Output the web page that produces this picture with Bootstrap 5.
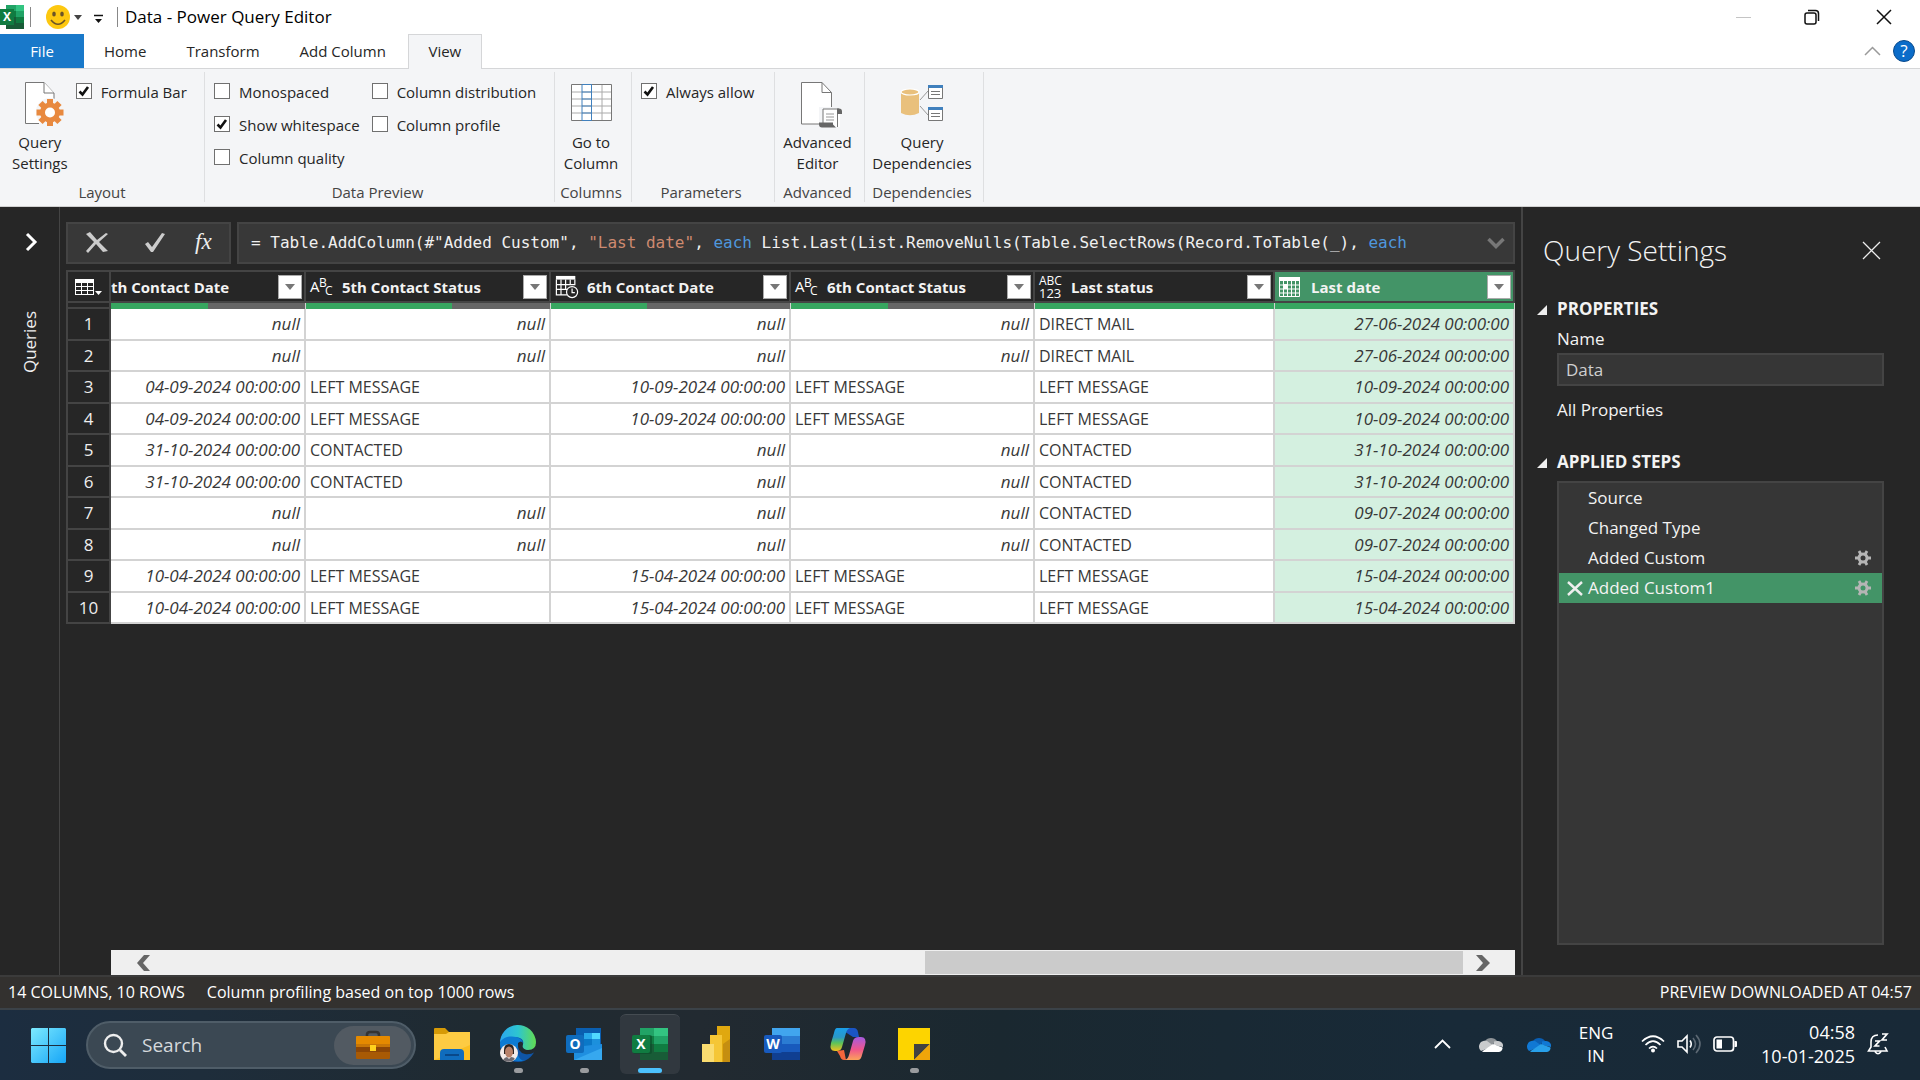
<!DOCTYPE html>
<html lang="en">
<head>
<meta charset="utf-8">
<meta name="viewport" content="width=device-width, initial-scale=1">
<title>Data - Power Query Editor</title>
<link href="https://cdn.jsdelivr.net/npm/bootstrap@5.3.0/dist/css/bootstrap.min.css" rel="stylesheet">
<style>
  :root { --pq-dark:#262626; --pq-panel:#363636; --pq-edge:#444; --pq-green:#439467; --pq-bar:#37a660; }
  body { font-family:"Open Sans","Noto Sans",sans-serif; font-size:15px; line-height:20px; color:#262626; background:var(--pq-dark); overflow:hidden; }
  button { font:inherit; color:inherit; background:none; border:0; padding:0; }
  svg { display:block; flex:none; overflow:visible; }
  a { color:inherit; text-decoration:none; }

  .titlebar { height:34px; background:#fff; font-size:17px; color:#000; }
  .titlebar .rule { width:1px; height:20px; background:#888; }
  .titlebar .smile { margin-left:15px; }
  .tabstrip { height:34px; background:#fff; }
  .tabstrip a { height:34px; line-height:34px; text-align:center; position:relative; }
  .tab-file { width:84px; background:#1979ca; color:#fff; }
  .tabstrip .tab-open { width:74px; height:35px; line-height:32px; margin-left:6px; background:#f4f5f7; border:1px solid #d5d6d8; border-bottom:0; }
  .help-dot { width:22px; height:22px; border-radius:50%; background:#0b6cc9; border:1px solid #0a4a8c; color:#fff; line-height:20px; font-size:17px; }

  .ribbon { height:139px; background:#f4f5f7; border-top:1px solid #d5d6d8; border-bottom:1px solid #d0d0d0; }
  .rgroup { display:flex; flex-direction:column; margin:3px 0 4px; padding:3px 4px 0 0; border-right:1px solid #dedfe1; }
  .rgroup h2 { font-size:15px; line-height:20px; font-weight:400; margin:auto 0 0; text-align:center; color:#444; }
  .g-layout { width:205px; padding-right:0; } .g-preview { width:350px; } .g-columns { width:77px; } .g-params { width:143px; } .g-adv { width:90px; } .g-dep { width:119px; }
  .big-btn { display:flex; flex-direction:column; align-items:center; line-height:21px; padding-top:6px; }
  .big-btn svg { margin-bottom:5px; }
  .tick { display:flex; align-items:center; height:33px; white-space:nowrap; }
  .tick input { appearance:none; width:16px; height:16px; margin:0 9px 2px 0; background:#fff; border:1px solid #707070; border-radius:0; flex:none; }
  .tick input:checked { background:#fff url("data:image/svg+xml,%3Csvg xmlns='http://www.w3.org/2000/svg' viewBox='0 0 14 14'%3E%3Cpath d='M2.5 7.5l3 3 5.500-7.500' fill='none' stroke='%23111' stroke-width='2.600'/%3E%3C/svg%3E"); }
  .inset { padding-left:9px; }

  .rail { flex:0 0 60px; border-right:1px solid var(--pq-edge); color:#eee; padding-top:26px; }
  .rail span { writing-mode:vertical-rl; transform:rotate(180deg); font-size:17px; line-height:24px; margin-top:60px; }
  .sheet { flex:1 1 0; min-width:0; padding:15px 6px 0 6px; border-right:2px solid var(--pq-edge); }
  .fx-row { gap:6px; }
  .fx-box { height:42px; background:#383838; border:2px solid var(--pq-edge); }
  .fx-btns { width:165px; padding-left:4px; }
  .fx-btns button { flex:1 1 0; display:flex; justify-content:center; }
  .fx-text { font-family:"DejaVu Sans Mono","Liberation Mono",monospace; font-size:16px; line-height:38px; color:#f0f0f0; white-space:pre; outline:0; }
  .fx-text .str { color:#ce8a70; } .fx-text .kw { color:#4f97dd; }

  .grid { table-layout:fixed; border-collapse:separate; border-spacing:0; width:100%; margin-top:6px; font-size:16px; line-height:20px; color:#383838; }
  .grid .c0 { width:45px; } .grid .c1 { width:195px; } .grid .c2 { width:245px; } .grid .c3 { width:240px; } .grid .c4 { width:244px; } .grid .c5 { width:240px; }
  .grid thead th { height:33px; padding:0; border:solid var(--pq-edge); border-width:2px 2px 2px 0; color:#f3f3f3; font-size:15px; font-weight:700; overflow:hidden; white-space:nowrap; }
  .grid tr > :first-child { border-left:2px solid var(--pq-edge); }
  .grid thead .picked { background:var(--pq-green); }
  .grid .ql td { height:6px; padding:0; border-right:1px solid #d3d3d3; }
  .grid .ql td:first-child { border-right:2px solid var(--pq-edge); border-bottom:2px solid var(--pq-edge); }
  .meter { height:6px; background:#666; } .meter div { height:6px; background:var(--pq-bar); }
  .hcell { display:flex; align-items:center; height:29px; padding:0 2px 0 4px; }
  .hcell .pic { width:24px; margin-right:8px; font-weight:400; }
  .hcell button { margin-left:auto; width:24px; height:24px; background:#fff; border:1px solid #aaa; display:flex; align-items:center; justify-content:center; }
  .grid tbody td, .grid tbody th { height:32px; padding:0 4px; background:#fff; border:solid #d3d3d3; border-width:0 2px 2px 0; white-space:nowrap; vertical-align:middle; overflow:hidden; }
  .grid tbody tr:nth-child(even) > * { height:31px; }
  .grid tbody th { background:var(--pq-dark); border-color:var(--pq-edge); color:#eee; font-weight:400; text-align:center; padding:0; font-size:17px; }
  .grid .v { text-align:right; font-style:italic; font-size:17px; }
  .grid tbody td:last-child { background:#d4f0e0; }
  .hbar { height:25px; margin-left:45px; background:#efefef; padding:1px 14px 1px 24px; }
  .hbar .thumb { width:538px; background:#cbcbcb; margin-right:8px; }

  .side { flex:0 0 397px; padding:24px 36px 30px 34px; color:#f3f3f3; font-size:17px; line-height:24px; white-space:nowrap; }
  .side h1 { font-size:28px; line-height:38px; font-weight:300; margin:0 0 0 -14px; }
  .side h2 { font-size:17px; line-height:24px; font-weight:700; margin:28px 0 0; position:relative; }
  .side h2::before { content:""; position:absolute; left:-20px; top:8px; border:solid transparent; border-width:0 0 10px 10px; border-bottom-color:#eee; }
  .side label { margin:6px 0 2px; }
  .side input { width:100%; height:33px; background:var(--pq-panel); border:2px solid var(--pq-edge); color:#cfcfcf; padding:0 7px 1px; font-size:17px; }
  .side .more { margin-top:12px; }
  .steps { background:var(--pq-panel); border:2px solid var(--pq-edge); list-style:none; margin:7px 0 0; padding:0; }
  .steps li { height:30px; display:flex; align-items:center; padding:0 11px 0 29px; }
  .steps .now { background:var(--pq-green); padding-left:8px; }
  .steps button { color:#b5b5b5; }

  .statusline { height:35px; background:#33312f; border-top:2px solid #3b3b3b; border-bottom:2px solid #3b4248; color:#fff; font-size:16px; padding:0 8px 2px; }
  .dock { height:70px; background:linear-gradient(90deg,#1c2d40 0,#1e2d3b 200px,#1f2a31 480px,#222a31 700px,#1a2830 1000px,#182a38 1450px,#182937 100%); color:#fff; padding:0 31px; }
  .finder { width:330px; height:48px; margin:0 3px 0 20px; border-radius:24px; background:#3b4853; border:2px solid #4f5d68; font-size:19px; padding:0 3px 0 15px; }
  .finder input { flex:1; min-width:0; background:none; border:0; outline:0; color:#d5d9dc; margin-left:15px; padding:0; }
  .finder input::placeholder { color:#d5d9dc; opacity:1; }
  .finder .case { width:77px; height:39px; border-radius:20px; background:#525a62; }
  .app { width:66px; height:70px; padding-bottom:2px; display:flex; align-items:center; justify-content:center; position:relative; }
  .app.live::after { content:""; position:absolute; bottom:7px; width:9px; height:5px; border-radius:3px; background:#9a9c9f; }
  .app.front::before { content:""; position:absolute; inset:4px 3px 6px; border-radius:6px; background:#31383f; border-top:1px solid #454c52; }
  .app.front::after { width:24px; background:#4cc2ff; }
  .app svg { position:relative; }
  .tray { padding-bottom:2px; }
  .tray-gap { margin-left:12px; }
  .cloud-grey { --a:#8f9498; --b:#c9cbcd; --c:#fff; margin-left:28px; }
  .cloud-blue { --a:#0a5fb4; --b:#1078d4; --c:#28a0ea; }
  .clock { font-size:18px; line-height:24px; text-align:right; }
  .lang { font-size:17px; line-height:23px; text-align:center; width:42px; }
  svg text { font-family:"Open Sans",sans-serif; }
  svg .serif { font-family:"Liberation Serif",serif; }
</style>
<script src="https://cdn.jsdelivr.net/npm/bootstrap@5.3.0/dist/js/bootstrap.bundle.min.js"></script>
</head>
<body class="vh-100 d-flex flex-column">

<svg width="0" height="0" class="position-absolute overflow-hidden" aria-hidden="true">
  <symbol id="tri" viewBox="0 0 10 6"><path d="M0 0h10L5 6z" fill="#777"/></symbol>
  <symbol id="gear" viewBox="0 0 16 16"><path d="M0 8h16M4 1l8 14M12 1L4 15" stroke="currentColor" stroke-width="2.800"/><circle cx="8" cy="8" r="5.500" fill="currentColor"/></symbol>
  <symbol id="calclock" viewBox="0 0 26 26"><path d="M1 1h21v4H1z" fill="#fff"/><path d="M1.500 5v16.500H13M6.500 5v16M11.500 5v10M16.500 5v6M21.500 5v6M1 10.500h21M1 15.500h12" fill="none" stroke="#fff" stroke-width="1.300"/><circle cx="18.500" cy="18.500" r="6" fill="#262626" stroke="#fff" stroke-width="1.300"/><path d="M18.500 14.500v4.500h3" fill="none" stroke="#fff" stroke-width="1.300"/></symbol>
  <symbol id="cloud" viewBox="0 0 24 16"><path d="M6 5a7 6 0 0 1 12 0l-6 5z" fill="var(--a)"/><path d="M0 11a6 6 0 0 1 8-6l7 5-13 5a5 5 0 0 1-2-4z" fill="var(--b)"/><path d="M15 5.500a7 7 0 0 1 4-.5 5 5 0 0 1 5 6L15 9z" fill="var(--b)"/><path d="M3 15.500L14 8l9.500 3.500A4 4 0 0 1 20 16H6q-2 0-3-.5z" fill="var(--c)"/></symbol>
</svg>

<header>
  <div class="titlebar d-flex align-items-center">
    <svg width="24" height="24" viewBox="0 0 24 24"><path d="M6 0h10v6H6z" fill="#21a366"/><path d="M16 0h8v6h-8z" fill="#33c481"/><path d="M6 6h10v6H6z" fill="#107c41"/><path d="M16 6h8v6h-8z" fill="#21a366"/><path d="M6 12h10v12H6z" fill="#185c37"/><path d="M16 12h8v6h-8z" fill="#107c41"/><path d="M16 18h8v6h-8z" fill="#185c37"/><path d="M0 4h14v16H0z" fill="#107c41"/><text x="7" y="16" text-anchor="middle" font-size="12" font-weight="700" fill="#fff">X</text></svg>
    <span class="rule" style="margin-left:6px"></span>
    <button class="smile d-flex align-items-center" aria-label="Send a smile">
      <svg width="24" height="24" viewBox="0 0 24 24"><circle cx="12" cy="12" r="12" fill="#fdc810"/><ellipse cx="8" cy="9" rx="1.800" ry="2.600" fill="#6a5428"/><ellipse cx="16" cy="9" rx="1.800" ry="2.600" fill="#6a5428"/><path d="M5 15q7 8.500 14 0" fill="none" stroke="#6a5428" stroke-width="1.600"/></svg>
      <svg class="ms-1" width="8" height="5" viewBox="0 0 10 6"><path d="M0 0h10L5 6z" fill="#444"/></svg>
    </button>
    <button class="ms-2 ps-1" aria-label="Customize toolbar"><svg class="mt-1" width="9" height="10" viewBox="0 0 9 10"><path d="M0 1.500h9" stroke="#111" stroke-width="1.500"/><path d="M1 5h7L4.500 9z" fill="#111"/></svg></button>
    <span class="rule" style="margin-left:14px"></span>
    <span style="margin-left:7px">Data - Power Query Editor</span>
    <div class="ms-auto d-flex align-items-center gap-5 pe-4">
      <button class="me-1" aria-label="Minimize"><svg width="16" height="16"><path d="M0 8.500h15" stroke="#c4c4c4"/></svg></button>
      <button aria-label="Restore"><svg width="16" height="16" viewBox="0 0 16 16" fill="none" stroke="#111" stroke-width="1.500"><rect x="1" y="4" width="11" height="11" rx="2"/><path d="M4 1.500h7.500a3 3 0 0 1 3 3V12"/></svg></button>
      <button class="ms-2 me-1" aria-label="Close"><svg width="16" height="16"><path d="M1 1l14 14M15 1L1 15" stroke="#111" stroke-width="1.500"/></svg></button>
    </div>
  </div>
  <nav class="tabstrip d-flex align-items-start" aria-label="Ribbon">
    <a href="#" class="tab-file">File</a>
    <a href="#" class="px-3 ms-1">Home</a>
    <a href="#" class="px-3 ms-2">Transform</a>
    <a href="#" class="px-3 ms-2">Add Column</a>
    <a href="#" class="tab-open" aria-current="page">View</a>
    <div class="ms-auto d-flex align-items-center gap-2 pt-1" style="margin:2px 5px 0 0">
      <button class="me-1" aria-label="Collapse ribbon"><svg width="17" height="10"><path d="M1 9l7.500-7.500L16 9" fill="none" stroke="#9a9a9a" stroke-width="1.500"/></svg></button>
      <button class="help-dot" aria-label="Help">?</button>
    </div>
  </nav>
  <div class="ribbon d-flex">
    <section class="rgroup g-layout">
      <div class="d-flex">
        <button class="big-btn ms-2 ps-1">
          <svg width="54" height="46" viewBox="-1 0 54 46"><path d="M11.500 1.500H30l10 10.500V42.500H11.500z" fill="#fff" stroke="#777"/><path d="M30 1.500V12h10" fill="#fff" stroke="#777"/><circle cx="36" cy="31" r="14" fill="#f4f5f7"/><path d="M25 42v4h28V16H41v26z" fill="#f4f5f7"/><g stroke="#e8893f" stroke-width="6"><path d="M36 18v27M22.500 31.500h27M26.500 22l19 19M45.500 22l-19 19"/></g><circle cx="36" cy="31.500" r="10" fill="#e8893f"/><circle cx="36" cy="31.500" r="5" fill="#fff"/></svg>
          <span>Query<br>Settings</span></button>
        <label class="tick align-self-start ms-2"><input type="checkbox" checked>Formula Bar</label>
      </div>
      <h2>Layout</h2>
    </section>
    <section class="rgroup g-preview">
      <div class="d-flex inset">
        <div><label class="tick"><input type="checkbox">Monospaced</label><label class="tick"><input type="checkbox" checked>Show whitespace</label><label class="tick"><input type="checkbox">Column quality</label></div>
        <div class="ms-2 ps-1"><label class="tick"><input type="checkbox">Column distribution</label><label class="tick"><input type="checkbox">Column profile</label></div>
      </div>
      <h2>Data Preview</h2>
    </section>
    <section class="rgroup g-columns">
      <button class="big-btn"><svg width="42" height="46" viewBox="-1 -1 42 46"><path d="M.5 2.500h40v36H.5z" fill="#fff"/><path d="M1 10h40M1 17h40M1 24h40M1 31h40M31 3v35" stroke="#aaa"/><path d="M.5 2.500h40v36H.5z" fill="none" stroke="#777"/><path d="M11 2.500h9.500v36H11zM11 10h10M11 17h10M11 24h10M11 31h10" fill="none" stroke="#4080bd"/></svg><span>Go to<br>Column</span></button>
      <h2>Columns</h2>
    </section>
    <section class="rgroup g-params">
      <label class="tick inset"><input type="checkbox" checked>Always allow</label>
      <h2>Parameters</h2>
    </section>
    <section class="rgroup g-adv">
      <button class="big-btn"><svg width="42" height="46" viewBox="-3 -1 42 46"><path d="M1.500 .5H22l9.500 10V42H1.500z" fill="#fff" stroke="#777"/><path d="M22 .5v10h9.500" fill="none" stroke="#777"/><path d="M19 25h23v21H19z" fill="#f4f5f7"/><path d="M23 27h17v18H23z" fill="#fff"/><path d="M23 41V27h16M37.500 45V30" fill="none" stroke="#777"/><path d="M37 26.500h2a3 3 0 0 1 3 3V32h-5zM19 40.500h14v2l3 3H22q-3 0-3-3z" fill="#666"/><path d="M26 32h8M26 35h8M26 38h8" stroke="#999"/></svg><span>Advanced<br>Editor</span></button>
      <h2>Advanced</h2>
    </section>
    <section class="rgroup g-dep">
      <button class="big-btn"><svg width="44" height="46" viewBox="0 0 44 46"><path d="M1 10v22q9 4.500 18 0V10z" fill="#e9c07c"/><ellipse cx="10" cy="11" rx="9" ry="3" fill="#e9c07c" stroke="#fff" stroke-width="1.200"/><path d="M20 19l8-9M20 25l8 9" stroke="#999"/><path d="M28.500 4.500h14v13h-14zM28.500 26.500h14v13h-14z" fill="#fff" stroke="#777"/><path d="M28 4h15v3H28zM28 26h15v3H28z" fill="#4080bd"/><path d="M31 10.500h9M31 13.500h9M31 32.500h9M31 35.500h9" stroke="#777"/></svg><span>Query<br>Dependencies</span></button>
      <h2>Dependencies</h2>
    </section>
  </div>
</header>

<main class="d-flex flex-grow-1 overflow-hidden">
  <aside class="rail d-flex flex-column align-items-center">
    <button class="ps-1" aria-label="Expand queries"><svg width="14" height="18" viewBox="0 0 14 18"><path d="M2 1l8 8-8 8" fill="none" stroke="#fff" stroke-width="3"/></svg></button>
    <span>Queries</span>
  </aside>

  <section class="sheet d-flex flex-column">
    <div class="d-flex fx-row">
      <div class="fx-box fx-btns d-flex align-items-center">
        <button aria-label="Cancel"><svg width="22" height="22" viewBox="0 0 22 22"><path d="M0 2l4-2 7 8 9-7 2 1-9 8 9 9-5 1-7-8-8 9-2-2 8-9z" fill="#ccc"/></svg></button>
        <button class="ps-2" aria-label="Commit"><svg width="20" height="20" viewBox="0 0 20 20"><path d="M0 11l3-2 4 5L17 0l3 1L8 19H6z" fill="#ccc"/></svg></button>
        <button aria-label="Insert step"><svg width="22" height="28" viewBox="0 0 22 28"><text x="2" y="20" font-size="23" font-style="italic" fill="#eee" class="serif">fx</text></svg></button>
      </div>
      <div class="fx-box flex-grow-1 d-flex align-items-center overflow-hidden">
        <div class="fx-text flex-grow-1 ps-2 ms-1 overflow-hidden" role="textbox" aria-label="Formula" contenteditable="true" spellcheck="false">= Table.AddColumn(#"Added Custom", <span class="str">"Last date"</span>, <span class="kw">each</span> List.Last(List.RemoveNulls(Table.SelectRows(Record.ToTable(_), <span class="kw">each</span></div>
        <button class="me-2" aria-label="Expand formula bar"><svg width="18" height="12" viewBox="0 0 18 12"><path d="M1.500 2L9 9.500 16.500 2" fill="none" stroke="#777" stroke-width="3.500"/></svg></button>
      </div>
    </div>

    <table class="grid">
      <colgroup><col class="c0"><col class="c1"><col class="c2"><col class="c3"><col class="c4"><col class="c5"><col></colgroup>
      <thead>
        <tr>
          <th><button class="d-block mx-auto" aria-label="Table options"><svg width="27" height="18" viewBox="0 0 27 18"><path d="M0 1h19v16H0z" fill="#fff"/><path d="M1 5h5v3H1zM7 5h5v3H7zM13 5h5v3h-5zM1 9h5v3H1zM7 9h5v3H7zM13 9h5v3h-5zM1 13h5v3H1zM7 13h5v3H7zM13 13h5v3h-5z" fill="#262626"/><path d="M20 13h7l-3.500 4z" fill="#fff"/></svg></button></th>
          <th scope="col"><div class="hcell ps-0">th Contact Date<button aria-label="Filter"><svg width="10" height="6"><use href="#tri"/></svg></button></div></th>
          <th scope="col"><div class="hcell"><svg class="pic" height="22" viewBox="0 0 24 22"><g fill="#fff"><text x="0" y="16" font-size="15">A</text><text x="9" y="11" font-size="12">B</text><text x="15" y="19" font-size="12">C</text></g></svg>5th Contact Status<button aria-label="Filter"><svg width="10" height="6"><use href="#tri"/></svg></button></div></th>
          <th scope="col"><div class="hcell"><svg class="pic" height="24"><use href="#calclock"/></svg>6th Contact Date<button aria-label="Filter"><svg width="10" height="6"><use href="#tri"/></svg></button></div></th>
          <th scope="col"><div class="hcell"><svg class="pic" height="22" viewBox="0 0 24 22"><g fill="#fff"><text x="0" y="16" font-size="15">A</text><text x="9" y="11" font-size="12">B</text><text x="15" y="19" font-size="12">C</text></g></svg>6th Contact Status<button aria-label="Filter"><svg width="10" height="6"><use href="#tri"/></svg></button></div></th>
          <th scope="col"><div class="hcell"><svg class="pic" height="26" viewBox="0 0 24 26"><g fill="#fff"><text x="0" y="11" font-size="12">ABC</text><text x="0" y="24" font-size="13">123</text></g></svg>Last status<button aria-label="Filter"><svg width="10" height="6"><use href="#tri"/></svg></button></div></th>
          <th scope="col" class="picked"><div class="hcell"><svg class="pic" height="20" viewBox="0 0 24 20"><path d="M0 0h21v4H0z" fill="#fff"/><path d="M.5 4v15.500h20V4M4.500 4v15M8.500 4v15M12.500 4v15M16.500 4v15M0 8h21M0 12h21M0 16h21" fill="none" stroke="#fff"/><path d="M4 7h5v5H4z" fill="#fff"/></svg>Last date<button aria-label="Filter"><svg width="10" height="6"><use href="#tri"/></svg></button></div></th>
        </tr>
        <tr class="ql"><td></td>
          <td><div class="meter"><div style="width:50%"></div></div></td><td><div class="meter"><div style="width:60%"></div></div></td><td><div class="meter"><div style="width:40%"></div></div></td><td><div class="meter"><div style="width:40%"></div></div></td><td><div class="meter"><div style="width:100%"></div></div></td><td><div class="meter"><div style="width:100%"></div></div></td></tr>
      </thead>
      <tbody>
        <tr><th scope="row">1</th><td class="v">null</td><td class="v">null</td><td class="v">null</td><td class="v">null</td><td>DIRECT MAIL</td><td class="v">27-06-2024 00:00:00</td></tr>
        <tr><th scope="row">2</th><td class="v">null</td><td class="v">null</td><td class="v">null</td><td class="v">null</td><td>DIRECT MAIL</td><td class="v">27-06-2024 00:00:00</td></tr>
        <tr><th scope="row">3</th><td class="v">04-09-2024 00:00:00</td><td>LEFT MESSAGE</td><td class="v">10-09-2024 00:00:00</td><td>LEFT MESSAGE</td><td>LEFT MESSAGE</td><td class="v">10-09-2024 00:00:00</td></tr>
        <tr><th scope="row">4</th><td class="v">04-09-2024 00:00:00</td><td>LEFT MESSAGE</td><td class="v">10-09-2024 00:00:00</td><td>LEFT MESSAGE</td><td>LEFT MESSAGE</td><td class="v">10-09-2024 00:00:00</td></tr>
        <tr><th scope="row">5</th><td class="v">31-10-2024 00:00:00</td><td>CONTACTED</td><td class="v">null</td><td class="v">null</td><td>CONTACTED</td><td class="v">31-10-2024 00:00:00</td></tr>
        <tr><th scope="row">6</th><td class="v">31-10-2024 00:00:00</td><td>CONTACTED</td><td class="v">null</td><td class="v">null</td><td>CONTACTED</td><td class="v">31-10-2024 00:00:00</td></tr>
        <tr><th scope="row">7</th><td class="v">null</td><td class="v">null</td><td class="v">null</td><td class="v">null</td><td>CONTACTED</td><td class="v">09-07-2024 00:00:00</td></tr>
        <tr><th scope="row">8</th><td class="v">null</td><td class="v">null</td><td class="v">null</td><td class="v">null</td><td>CONTACTED</td><td class="v">09-07-2024 00:00:00</td></tr>
        <tr><th scope="row">9</th><td class="v">10-04-2024 00:00:00</td><td>LEFT MESSAGE</td><td class="v">15-04-2024 00:00:00</td><td>LEFT MESSAGE</td><td>LEFT MESSAGE</td><td class="v">15-04-2024 00:00:00</td></tr>
        <tr><th scope="row">10</th><td class="v">10-04-2024 00:00:00</td><td>LEFT MESSAGE</td><td class="v">15-04-2024 00:00:00</td><td>LEFT MESSAGE</td><td>LEFT MESSAGE</td><td class="v">15-04-2024 00:00:00</td></tr>
      </tbody>
    </table>

    <div class="hbar d-flex align-items-center mt-auto">
      <button aria-label="Scroll left"><svg width="18" height="18" viewBox="0 0 18 18"><path d="M9 1h6L8 9l7 8H9L2 9z" fill="#666"/></svg></button>
      <div class="thumb ms-auto align-self-stretch"></div>
      <button class="ms-1 me-2" aria-label="Scroll right"><svg width="18" height="18" viewBox="0 0 18 18"><path d="M1 1h6l8 8-8 8H1l7-8z" fill="#666"/></svg></button>
    </div>
  </section>

  <aside class="side d-flex flex-column">
    <div class="d-flex align-items-center">
      <h1>Query Settings</h1>
      <button class="ms-auto me-1" aria-label="Close settings"><svg width="17" height="17"><path d="M0 0l17 17M17 0L0 17" stroke="#eee" stroke-width="1.300"/></svg></button>
    </div>
    <h2>PROPERTIES</h2>
    <label for="qname">Name</label>
    <input id="qname" type="text" value="Data">
    <a href="#" class="more">All Properties</a>
    <h2>APPLIED STEPS</h2>
    <ul class="steps flex-grow-1">
      <li>Source</li>
      <li>Changed Type</li>
      <li>Added Custom<button class="ms-auto" aria-label="Edit Added Custom"><svg width="16" height="16"><use href="#gear"/><circle cx="8" cy="8" r="2.500" fill="#363636"/></svg></button></li>
      <li class="now"><button class="me-1" aria-label="Delete step"><svg width="17" height="15" viewBox="0 0 17 15"><path d="M1 1l14 13M15 1L1 14" stroke="#eee" stroke-width="2.400"/></svg></button>Added Custom1<button class="ms-auto" aria-label="Edit Added Custom1"><svg width="16" height="16"><use href="#gear"/><circle cx="8" cy="8" r="2.500" fill="#439467"/></svg></button></li>
    </ul>
  </aside>
</main>

<div class="statusline d-flex align-items-center">
  <span>14 COLUMNS, 10 ROWS</span><span style="margin-left:22px">Column profiling based on top 1000 rows</span>
  <span class="ms-auto">PREVIEW DOWNLOADED AT 04:57</span>
</div>

<footer class="dock d-flex align-items-center">
  <button aria-label="Start"><svg width="35" height="35" viewBox="0 0 35 35"><defs><linearGradient id="wn" x1="0" y1="0" x2="1" y2="1"><stop offset="0" stop-color="#7deaff"/><stop offset="1" stop-color="#16a5f7"/></linearGradient></defs><path d="M1 0h16v17H0V1zM18 0h16l1 1v16H18zM0 18h17v17H1l-1-1zM18 18h17v16l-1 1H18z" fill="url(#wn)"/></svg></button>
  <div class="finder d-flex align-items-center">
    <svg width="24" height="24" viewBox="0 0 24 24"><circle cx="10.500" cy="10.500" r="8.500" fill="none" stroke="#eee" stroke-width="2.400"/><path d="M17 17l6 6" stroke="#eee" stroke-width="2.800"/></svg>
    <input type="search" placeholder="Search" aria-label="Search">
    <span class="case d-flex align-items-center justify-content-center"><svg width="34" height="28" viewBox="0 0 34 28"><path d="M11 6V4q0-3 3-3h6q3 0 3 3v2" fill="none" stroke="#333" stroke-width="2.600"/><rect y="5" width="34" height="23" rx="1.500" fill="#a85a05"/><path d="M0 6q0-1 1-1h32q1 0 1 1v7H0z" fill="#e58a00"/><path d="M0 13h34v3H0z" fill="#c87606"/><path d="M0 16h34v5H0z" fill="#8c4606"/><rect x="14" y="14" width="6" height="6" fill="#ffd21e"/></svg></span>
  </div>
  <nav class="d-flex" aria-label="Taskbar apps">
    <button class="app" aria-label="File Explorer"><svg width="36" height="34" viewBox="0 0 36 34"><path d="M0 2q0-1 1-1h10l4 4v6H0z" fill="#d69a06"/><path d="M0 7h12l3-2h21v28H0z" fill="#fdcb43"/><path d="M0 33L36 18v15z" fill="#fbbf22"/><path d="M6 33v-7q0-4 4-4h16q4 0 4 4v7z" fill="#0f6cbd"/><path d="M11 28h14" stroke="#083f7c" stroke-width="1.600"/></svg></button>
    <button class="app live" aria-label="Edge"><svg width="36" height="36" viewBox="0 0 36 36"><defs><linearGradient id="ed"><stop offset="0" stop-color="#2ba6ef"/><stop offset=".5" stop-color="#2dc5d0"/><stop offset="1" stop-color="#63dc50"/></linearGradient></defs><circle cx="18" cy="18" r="18" fill="#0f55a8"/><path d="M22 18h14v6l-3 1q-12 3-13-3z" fill="#222a31"/><path d="M0 18a18 18 0 0 1 36-2q0 8-8 8-6 0-6-3c0-2 2-2 1-6S13 10 7 12s-7 4-7 6z" fill="url(#ed)"/><path d="M0 18c0-6 10-9 16-7 7 2 7 6 6 8s-5 0-5 7c1 6 5 9 8 9h-6A18 18 0 0 1 0 18z" fill="#0c7bd3"/><path d="M18 17q3-3 5 0-2 5 3 7 6 1 9-1v3q-5 3-10 2-8-2-7-11z" fill="#222a31"/><circle cx="9" cy="27" r="9" fill="#f4ece9"/><path d="M4 24q0-6 5-6t5 6v4H4z" fill="#2b2422"/><ellipse cx="9" cy="26" rx="4" ry="5.500" fill="#b9826a"/><path d="M3 34q2-3 4-3l2 2 2-2q3 0 4 2-5 5-12 1z" fill="#6e6a70"/></svg></button>
    <button class="app live" aria-label="Outlook"><svg width="36" height="34" viewBox="0 0 36 34"><path d="M10 1h25v20H10z" fill="#0a5eb0"/><path d="M18 6h8v6h-8z" fill="#28a8ea"/><path d="M26 6h8v6h-8z" fill="#50d9ff"/><path d="M18 12h8v7h-8z" fill="#0a78c8"/><path d="M26 12h8v7h-8z" fill="#1c90dc"/><path d="M8 33V20l28-3v16z" fill="#1f8fe0"/><path d="M8 33l28-12v12z" fill="#36a8ef"/><rect y="8" width="18" height="18" rx="2" fill="#0f6cbd"/><text x="9" y="22" text-anchor="middle" font-size="14" font-weight="700" fill="#fff">O</text></svg></button>
    <button class="app live front" aria-label="Excel"><svg width="36" height="34" viewBox="0 0 36 34"><path d="M8 1h14v8H8z" fill="#21a366"/><path d="M22 1h14v8H22z" fill="#33c481"/><path d="M8 9h14v8H8z" fill="#107c41"/><path d="M22 9h14v8H22z" fill="#21a366"/><path d="M8 17h14v8H8z" fill="#185c37"/><path d="M22 17h14v8H22z" fill="#107c41"/><path d="M8 25h28v8H8z" fill="#185c37"/><rect x="1" y="8" width="19" height="19" rx="2" fill="#0b4a28" opacity=".6"/><rect y="8" width="18" height="18" rx="2" fill="#107c41"/><text x="9" y="22" text-anchor="middle" font-size="14" font-weight="700" fill="#fff">X</text></svg></button>
    <button class="app" aria-label="Power BI"><svg width="28" height="36" viewBox="0 0 28 36"><path d="M15 0h13v36H15z" fill="#e0a80f"/><path d="M21 18l7-5v23h-7z" fill="#c58e10"/><path d="M8 9h12v27H8z" fill="#f5c636"/><path d="M0 18h12v18H0z" fill="#fadc70"/></svg></button>
    <button class="app" aria-label="Word"><svg width="36" height="34" viewBox="0 0 36 34"><path d="M8 1h28v8H8z" fill="#41a5ee"/><path d="M8 9h28v8H8z" fill="#2b7cd3"/><path d="M8 17h28v8H8z" fill="#185abd"/><path d="M8 25h28v8H8z" fill="#103f91"/><rect y="8" width="18" height="18" rx="2" fill="#185abd"/><text x="9" y="22" text-anchor="middle" font-size="14" font-weight="700" fill="#fff">W</text></svg></button>
    <button class="app" aria-label="Copilot"><svg width="36" height="34" viewBox="0 0 36 34"><defs><linearGradient id="ca" x1="0" y1="0" x2="0" y2="1"><stop offset="0" stop-color="#1a9ee8"/><stop offset=".4" stop-color="#2a98c8"/><stop offset=".65" stop-color="#5bc35a"/><stop offset="1" stop-color="#f2c01e"/></linearGradient><linearGradient id="cb" x1="0" y1="0" x2="0" y2="1"><stop offset="0" stop-color="#a55be0"/><stop offset=".55" stop-color="#f0568c"/><stop offset="1" stop-color="#fba25a"/></linearGradient></defs><path d="M9 1h15q3 0 4 4l1 5h-6z" fill="#1a55c4"/><path d="M7 1h13q-3 1-4 5l-4 14q-1 4-5 4H5q-6 0-4-8l3-10q1-5 3-5z" fill="url(#ca)"/><path d="M7 24l7-1 2 10h-2q-3 0-4-4z" fill="#f2663c"/><path d="M29 10h2q6 0 4 8l-3 10q-1 5-4 5H15q3-1 4-5l4-14q1-4 6-4z" fill="url(#cb)"/></svg></button>
    <button class="app live" aria-label="Sticky Notes"><svg width="32" height="32" viewBox="0 0 32 32"><path d="M0 0h32v32H0z" fill="#fdd400"/><path d="M16 32V16h16z" fill="#414141"/><path d="M16 32L32 16v16z" fill="#efa50a"/></svg></button>
  </nav>
  <div class="tray ms-auto d-flex align-items-center">
    <button aria-label="Hidden icons"><svg width="17" height="10"><path d="M1 9l7.500-7.500L16 9" fill="none" stroke="#fff" stroke-width="1.800"/></svg></button>
    <svg class="cloud-grey" width="24" height="16"><use href="#cloud"/></svg>
    <svg class="cloud-blue ms-4" width="24" height="16"><use href="#cloud"/></svg>
    <span class="lang ms-4">ENG<br>IN</span>
    <svg class="ms-4" width="24" height="18" viewBox="0 0 24 18"><g fill="none" stroke="#fff" stroke-width="1.700"><path d="M1 6.500q11-10.500 22 0M4.500 10q7.500-7.500 15 0M8 13.500q4-4 8 0"/></g><circle cx="12" cy="15.500" r="2" fill="#fff"/></svg>
    <svg class="tray-gap" width="24" height="20" viewBox="0 0 24 20" fill="none" stroke="#fff" stroke-width="1.600"><path d="M1 7h4l5-5v16l-5-5H1zM13 6.500q2.500 3.500 0 7"/><path d="M16 4q5 6 0 12M19 1q8 9 0 18" stroke="#5c6873"/></svg>
    <svg class="tray-gap" width="24" height="16" viewBox="0 0 24 16"><rect x="1" y="1" width="19.500" height="14" rx="3" fill="none" stroke="#fff" stroke-width="1.700"/><path d="M3.500 3.500h5.500v9H3.500z" fill="#fff"/><path d="M21.500 5H23q1 0 1 1v4q0 1-1 1h-1.500z" fill="#fff"/></svg>
    <span class="clock ms-4">04:58<br>10-01-2025</span>
    <svg class="tray-gap" width="22" height="22" viewBox="0 0 22 22"><path d="M11 2Q4 2 4 9v5l-2.500 4H20l-2-4M8 18.500q3 4.500 6 0" fill="none" stroke="#fff" stroke-width="1.600"/><path d="M8 8h4.500L8 13h4.500M15 1h5l-5 6h5" fill="none" stroke="#fff" stroke-width="1.700"/></svg>
  </div>
</footer>
</body>
</html>
